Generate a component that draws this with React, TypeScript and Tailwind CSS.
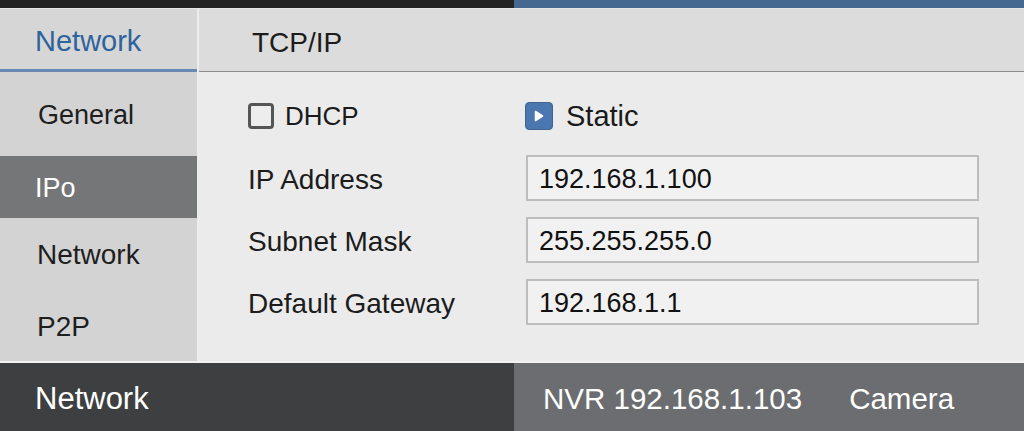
import React from "react";

const font = { fontFamily: '"Liberation Sans", Arial, sans-serif' };

function Field({ label, value }: { label: string; value: string }) {
  return (
    <div className="flex h-[46px] items-center">
      <div className="w-[278px] pt-[4px] text-[28px] text-[#1c1c1c]">{label}</div>
      <div className="flex h-[46px] w-[453px] items-center border-2 border-[#bdbdbd] bg-[#f1f1f1] pl-[11px] pt-[3px] text-[27px] text-[#111]">
        {value}
      </div>
    </div>
  );
}

export default function App() {
  const items = [
    { label: "General", h: "h-[84px]", active: false, pl: "pl-[38px]", size: "text-[27px]" },
    { label: "IPo", h: "h-[62px]", active: true, pl: "pl-[35px]", size: "text-[27px]" },
    { label: "Network", h: "h-[72px]", active: false, pl: "pl-[37px]", size: "text-[28px]" },
    { label: "P2P", h: "h-[71px]", active: false, pl: "pl-[37px]", size: "text-[28px]" },
  ];

  return (
    <div className="flex h-[431px] w-[1024px] flex-col overflow-hidden bg-[#ebebeb]" style={font}>
      {/* top strip */}
      <div className="flex h-[8px]">
        <div className="w-[514px] bg-[#232323]" />
        <div className="flex-1 bg-[#44688f]" />
      </div>
      <div className="h-px bg-[#e6e6e6]" />

      {/* main */}
      <div className="flex h-[352px]">
        {/* sidebar */}
        <div className="flex w-[197px] flex-col bg-[#d3d3d3]">
          <div className="flex h-[63px] items-center border-b-[3px] border-[#6889b2] bg-[#d6d6d6] pl-[35px] pt-[5px] text-[29px] text-[#2f639b]">
            Network
          </div>
          {items.map((it) => (
            <div
              key={it.label}
              className={`flex ${it.h} items-center ${it.pl} pt-[2px] ${it.size} ${
                it.active ? "bg-[#757677] text-white" : "text-[#1e1e1e]"
              }`}
            >
              {it.label}
            </div>
          ))}
        </div>

        {/* content */}
        <div className="flex flex-1 flex-col border-l-2 border-[#ececec]">
          <div className="flex h-[63px] items-center border-b border-[#8c8c8c] bg-[#dcdcdc] pl-[53px] pt-[6px] text-[28px] text-[#1c1c1c]">
            TCP/IP
          </div>
          <div className="flex flex-col pl-[49px] pt-[29px]">
            <div className="flex h-[29px] items-center">
              <div className="flex w-[277px] items-center">
                <div className="h-[26px] w-[26px] rounded-[4px] border-[3px] border-[#555] bg-[#ededed]" />
                <span className="ml-[11px] pt-[2px] text-[26px] text-[#1a1a1a]">DHCP</span>
              </div>
              <div className="flex items-center">
                <div className="flex h-[28px] w-[28px] items-center justify-center rounded-[4px] border border-[#3f6493] bg-[#4a77b0]">
                  <svg width="10" height="12" viewBox="0 0 10 12">
                    <path d="M1.5 1.5 L8.5 6 L1.5 10.5 Z" fill="#fff" stroke="#fff" strokeWidth="1.5" strokeLinejoin="round" />
                  </svg>
                </div>
                <span className="ml-[13px] pt-[2px] text-[29px] text-[#1a1a1a]">Static</span>
              </div>
            </div>
            <div className="mt-[25px] flex flex-col gap-[16px]">
              <Field label="IP Address" value="192.168.1.100" />
              <Field label="Subnet Mask" value="255.255.255.0" />
              <Field label="Default Gateway" value="192.168.1.1" />
            </div>
          </div>
        </div>
      </div>

      {/* bottom bar */}
      <div className="h-[2px] bg-[#f2f2f2]" />
      <div className="flex h-[68px]">
        <div className="flex w-[514px] items-center bg-[#3e3f40] pl-[35px] pt-[4px] text-[31px] text-white">Network</div>
        <div className="flex flex-1 items-center bg-[#6b6d70] pl-[29px] pt-[4px] text-[29.5px] text-white">
          <span>NVR 192.168.1.103</span>
          <span className="ml-[47px]">Camera</span>
        </div>
      </div>
    </div>
  );
}
